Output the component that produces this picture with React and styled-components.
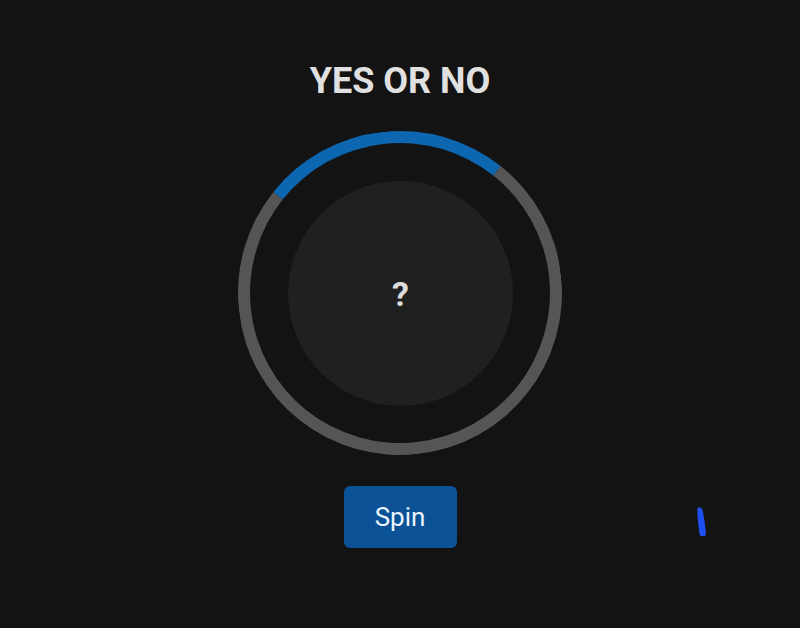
import styled, { createGlobalStyle } from "styled-components";

const GlobalStyle = createGlobalStyle`
  html, body {
    margin: 0;
    padding: 0;
    background: #131313;
  }
  body {
    font-family: Roboto, "Liberation Sans", sans-serif;
  }
`;

const Page = styled.div`
  position: relative;
  display: flex;
  flex-direction: column;
  align-items: center;
  min-height: 100vh;
  padding-top: 59px;
  box-sizing: border-box;
  background: #131313;
`;

const Title = styled.h1`
  margin: 0;
  font-size: 36px;
  line-height: 44px;
  font-weight: 700;
  color: #e0e0e0;
  letter-spacing: 0;
`;

const Wheel = styled.div`
  margin-top: 28px;
  width: 324px;
  height: 324px;
  box-sizing: border-box;
  border-radius: 50%;
  border: 12px solid #555555;
  border-top-color: #0d67b0;
  transform: rotate(-6.5deg);
  display: flex;
  align-items: center;
  justify-content: center;
`;

const Face = styled.div`
  width: 225px;
  height: 225px;
  border-radius: 50%;
  background: #202020;
  display: flex;
  align-items: center;
  justify-content: center;
  transform: rotate(6.5deg);
`;

const Answer = styled.span`
  font-size: 34px;
  font-weight: 700;
  color: #dcdcdc;
  line-height: 1;
`;

const SpinButton = styled.button`
  margin-top: 31px;
  width: 113px;
  height: 62px;
  border: none;
  border-radius: 6px;
  background: #0b5196;
  color: #eaf5ff;
  font-family: Roboto, "Liberation Sans", sans-serif;
  font-size: 26px;
  cursor: pointer;
`;

const Mark = styled.svg`
  position: absolute;
  left: 694px;
  top: 504px;
`;

export default function App() {
  return (
    <Page>
      <GlobalStyle />
      <Title>YES OR NO</Title>
      <Mark width="16" height="36" viewBox="0 0 16 36">
        <path
          d="M3.5 4 C5 2.5 7.5 3 8.5 6 C10 12 11 20 11.8 28 C12.2 31.5 11 33 9.5 32.5 C8.8 31.5 8 32.5 6.8 32 C5.5 31 5 27 4.5 22 C3.8 15 3 8 3.5 4 Z"
          fill="#1f4ff0"
        />
      </Mark>
      <Wheel>
        <Face>
          <Answer>?</Answer>
        </Face>
      </Wheel>
      <SpinButton>Spin</SpinButton>
    </Page>
  );
}
